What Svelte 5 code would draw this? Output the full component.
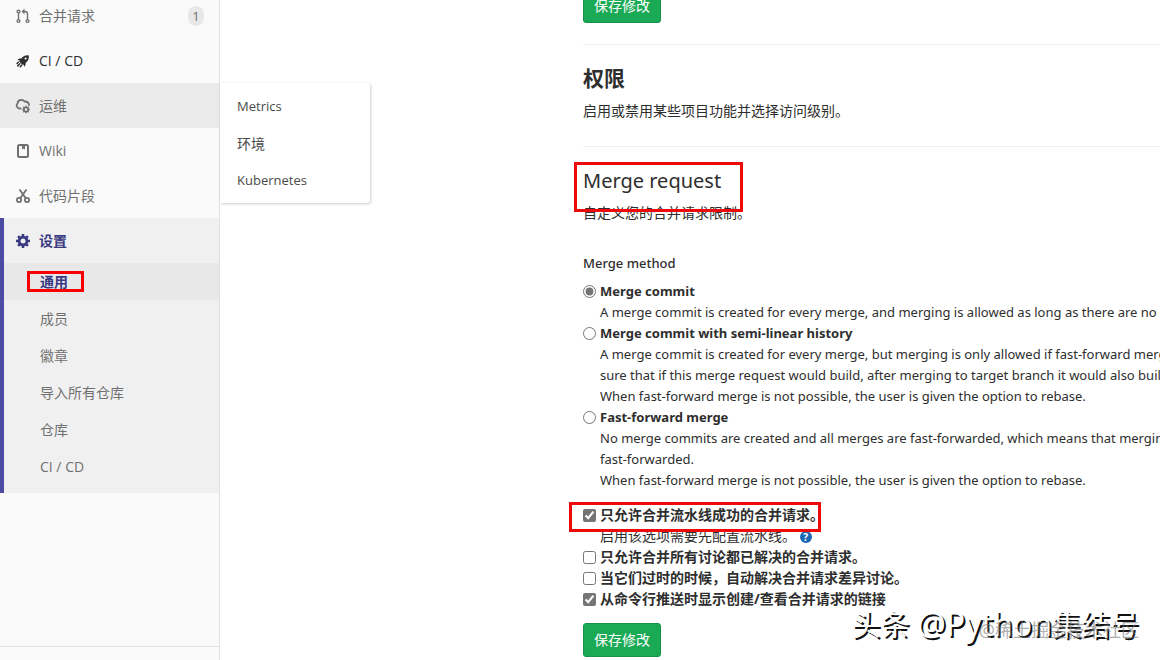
<script lang="ts">
	const submenu = ['通用', '成员', '徽章', '导入所有仓库', '仓库', 'CI / CD'];
	const flyout = ['Metrics', '环境', 'Kubernetes'];

	const methods = [
		{
			id: 'merge',
			label: 'Merge commit',
			lines: [
				'A merge commit is created for every merge, and merging is allowed as long as there are no conflicts.'
			]
		},
		{
			id: 'rebase_merge',
			label: 'Merge commit with semi-linear history',
			lines: [
				'A merge commit is created for every merge, but merging is only allowed if fast-forward merge is possible. This way you could make',
				'sure that if this merge request would build, after merging to target branch it would also build.',
				'When fast-forward merge is not possible, the user is given the option to rebase.'
			]
		},
		{
			id: 'ff',
			label: 'Fast-forward merge',
			lines: [
				'No merge commits are created and all merges are fast-forwarded, which means that merging is only allowed if the branch could be',
				'fast-forwarded.',
				'When fast-forward merge is not possible, the user is given the option to rebase.'
			]
		}
	];

	let method = $state('merge');

	let checks = $state([
		{
			id: 'pipeline',
			label: '只允许合并流水线成功的合并请求。',
			hint: '启用该选项需要先配置流水线。',
			on: true
		},
		{ id: 'discussions', label: '只允许合并所有讨论都已解决的合并请求。', hint: '', on: false },
		{ id: 'outdated', label: '当它们过时的时候，自动解决合并请求差异讨论。', hint: '', on: false },
		{ id: 'printing', label: '从命令行推送时显示创建/查看合并请求的链接', hint: '', on: true }
	]);
</script>

<div class="page">
	<aside class="sidebar">
		<ul class="nav">
			<li>
				<a class="item" href="#merge-requests">
					<svg viewBox="0 0 16 16" fill="none" stroke="currentColor" stroke-width="1.4">
						<circle cx="3.500" cy="3.500" r="1.4" />
						<circle cx="3.500" cy="13" r="1.4" />
						<circle cx="12.500" cy="13" r="1.4" />
						<path d="M3.500 5v6.500M12.500 11.500V6a2.500 2.500 0 0 0-2.500-2.500H9" />
						<path d="M9.500.5v6L6.500 3.500z" fill="currentColor" stroke="none" />
					</svg>
					<span>合并请求</span>
					<span class="badge">1</span>
				</a>
			</li>
			<li>
				<a class="item dark" href="#pipelines">
					<svg viewBox="0 0 16 16" fill="currentColor">
						<path
							fill-rule="evenodd"
							d="M13.800 2.400c.3 2.700-.5 4.900-2.200 6.600l-1 1c.2 1.500-.2 2.700-1.300 3.800l-.6-2.400-.9.700-3.700-3.700.7-.9-2.400-.6c1.100-1.100 2.300-1.500 3.800-1.300l1-1c1.700-1.700 3.900-2.500 6.600-2.200zM10.600 4.400a1.100 1.100 0 1 0 0 2.200 1.100 1.100 0 0 0 0-2.200z"
						/>
						<path
							d="M3.300 9.200l-1.300 1.300M4.900 10.800l-2.100 2.100M6.600 12.400L5.300 13.700"
							stroke="currentColor"
							stroke-width="1.500"
							stroke-linecap="round"
						/>
					</svg>
					<span>CI / CD</span>
				</a>
			</li>
			<li class="has-flyout">
				<a class="item hover" href="#operations">
					<svg viewBox="0 0 16 16" fill="none" stroke="currentColor">
						<path
							d="M5.500 10.500H4.300A3 3 0 0 1 2.500 5.400C2.800 3.200 4.600 1.800 6.800 2c1.300 0 2.300.7 2.900 1.500 2.400-.1 4 1.200 4.300 3.500"
							stroke-width="1.800"
							stroke-linecap="round"
						/>
						<circle cx="11" cy="11.500" r="2.100" stroke-width="1.700" />
						<path
							d="M11 7.700v1.500M11 13.800v1.500M7.200 11.500h1.500M13.300 11.500h1.500M8.300 8.800l1.100 1.100M12.600 13.100l1.100 1.100M13.700 8.800l-1.100 1.100M9.400 13.100l-1.100 1.100"
							stroke-width="1.400"
						/>
					</svg>
					<span>运维</span>
				</a>
				<ul class="flyout">
					{#each flyout as entry (entry)}
						<li><a href="#{entry}">{entry}</a></li>
					{/each}
				</ul>
			</li>
			<li>
				<a class="item" href="#wiki">
					<svg viewBox="0 0 16 16" fill="none" stroke="currentColor">
						<rect x="3" y="2" width="10" height="12" rx="1.500" stroke-width="2" />
						<path d="M7 2h3v4.500l-1.500-1L7 6.500z" fill="currentColor" stroke="none" />
					</svg>
					<span>Wiki</span>
				</a>
			</li>
			<li>
				<a class="item" href="#snippets">
					<svg viewBox="0 0 16 16" fill="none" stroke="currentColor" stroke-width="1.800">
						<circle cx="4" cy="12" r="2.100" />
						<circle cx="12" cy="12" r="2.100" />
						<path d="M4.500 1.500l6.300 8.800M11.500 1.500L5.200 10.300" />
					</svg>
					<span>代码片段</span>
				</a>
			</li>
			<li class="active">
				<a class="item" href="#settings">
					<svg viewBox="0 0 16 16" fill="none" stroke="currentColor">
						<circle cx="8" cy="8" r="3.900" stroke-width="2.800" />
						<path
							d="M8 1v2.500M8 12.500V15M1 8h2.500M12.500 8H15M3.100 3.100l1.700 1.700M11.200 11.200l1.700 1.700M12.900 3.100l-1.700 1.700M4.800 11.200l-1.700 1.700"
							stroke-width="2.600"
						/>
					</svg>
					<span>设置</span>
				</a>
				<ul class="submenu">
					{#each submenu as entry, i (entry)}
						<li>
							<a href="#{entry}" class:current={i === 0}>
								<span class:mark={i === 0}>{entry}</span>
							</a>
						</li>
					{/each}
				</ul>
			</li>
		</ul>
		<div class="collapse"></div>
	</aside>

	<main>
		<button type="button" class="save">保存修改</button>
		<hr />

		<section>
			<h4 class="strong">权限</h4>
			<p>启用或禁用某些项目功能并选择访问级别。</p>
		</section>
		<hr />

		<form onsubmit={(e) => e.preventDefault()}>
			<h4><span class="mark">Merge request</span></h4>
			<p>自定义您的合并请求限制。</p>

			<fieldset>
				<legend>Merge method</legend>
				{#each methods as m (m.id)}
					<div class="option">
						<input type="radio" id={m.id} name="method" value={m.id} bind:group={method} />
						<label for={m.id}>{m.label}</label>
						<div class="help">
							{#each m.lines as line (line)}
								<div>{line}</div>
							{/each}
						</div>
					</div>
				{/each}
			</fieldset>

			<div class="checks">
				{#each checks as check, i (check.id)}
					<div class="option" class:mark={i === 0}>
						<input type="checkbox" id={check.id} bind:checked={check.on} />
						<label for={check.id}>{check.label}</label>
						{#if check.hint}
							<div class="help">
								{check.hint}
								<a class="question" href="#help" aria-label="帮助">?</a>
							</div>
						{/if}
					</div>
				{/each}
			</div>

			<button type="submit" class="save">保存修改</button>
		</form>
	</main>

	<div class="watermark">
		<span class="big">头条 <span class="latin">@Python</span>集结号</span>
		<span class="small">@稀土掘金技术社区</span>
	</div>
</div>

<style>
	:global(body) {
		overflow: hidden;
		background: #fff;
	}

	.page {
		position: relative;
		display: flex;
		height: 100vh;
		overflow: hidden;
		color: #2e2e2e;
		font: 14px/21px 'Noto Sans', 'Noto Sans CJK SC', sans-serif;
	}

	ul {
		margin: 0;
		padding: 0;
		list-style: none;
	}

	a {
		color: inherit;
		text-decoration: none;
	}

	.sidebar {
		display: flex;
		flex: 0 0 220px;
		flex-direction: column;
		box-sizing: border-box;
		border-right: 1px solid #e1e1e1;
		background: #fafafa;
		color: #707070;
		font-family: 'Open Sans', 'Noto Sans CJK SC', sans-serif;
	}

	/* the list is scrolled slightly past its first entry */
	.nav {
		flex: 1;
		margin-top: -7px;
	}

	.item {
		display: flex;
		align-items: center;
		gap: 8px;
		height: 45px;
		padding: 0 15px;
	}

	.item svg {
		width: 16px;
		height: 16px;
	}

	.item.dark {
		color: #2e2e2e;
	}

	.item.hover {
		background: #ebebeb;
	}

	.badge {
		width: 16px;
		margin-left: auto;
		border-radius: 10px;
		background: #e8e8e8;
		font-size: 13px;
		line-height: 20px;
		text-align: center;
	}

	.has-flyout {
		position: relative;
	}

	.flyout {
		position: absolute;
		z-index: 2;
		top: 0;
		left: 100%;
		width: 150px;
		margin-left: 1px;
		padding: 5px 0 4px;
		border-radius: 0 3px 3px 0;
		background: #fff;
		box-shadow: 1px 1px 3px rgba(0, 0, 0, 0.2);
		color: #4a4a4a;
		font-size: 13px;
	}

	.flyout a {
		display: block;
		padding: 8px 17px;
	}

	.flyout li:nth-child(2) {
		font-size: 14px;
	}

	.active {
		padding-bottom: 8px;
		background: #f0f0f0;
		box-shadow: inset 4px 0 #4b4ba3;
	}

	.active > .item {
		color: #393982;
		font-weight: 600;
	}

	.submenu a {
		display: block;
		padding: 8px 16px 8px 40px;
	}

	.submenu .current {
		background: linear-gradient(to right, #4b4ba3 4px, #e8e8e8 4px);
		color: #393982;
		font-weight: 600;
	}

	.collapse {
		height: 13px;
		border-top: 1px solid #e1e1e1;
	}

	.mark {
		position: relative;
	}

	.mark::after {
		position: absolute;
		border: 3px solid #ee0a0a;
		content: '';
		pointer-events: none;
	}

	.submenu .mark::after {
		inset: -1px -16px -1px -13px;
		border-color: #f90000;
	}

	h4 .mark::after {
		inset: -5px -22px -18px -9px;
	}

	.option.mark::after {
		top: -2px;
		left: -14px;
		width: 246px;
		height: 24px;
	}

	main {
		flex: 1;
		min-width: 0;
		margin-top: -11px;
		padding-left: 363px;
		overflow: hidden;
		white-space: nowrap;
	}

	section {
		padding-bottom: 4px;
	}

	hr {
		height: 1px;
		margin: 21px 0 20px;
		border: 0;
		background: #eee;
	}

	h4 {
		margin: 0 0 7px;
		font-size: 20px;
		font-weight: 400;
		line-height: 28px;
	}

	h4.strong {
		margin-bottom: 9px;
		font-size: 21px;
		font-weight: 700;
		line-height: 26px;
	}

	p {
		margin: 0;
	}

	fieldset {
		min-width: 0;
		margin: 30px 0 13px;
		padding: 0;
		border: 0;
		font-size: 13px;
	}

	legend {
		padding: 0 0 7px;
		font-weight: 500;
	}

	.option {
		display: grid;
		grid-template-columns: 13px 1fr;
		column-gap: 4px;
		align-items: center;
	}

	.option input {
		width: 13px;
		height: 13px;
		margin: 0;
		accent-color: #757575;
	}

	.checks input {
		margin-top: 2px;
	}

	.option label {
		font-weight: 700;
	}

	.help {
		grid-column: 2;
	}

	.question {
		display: inline-block;
		width: 12px;
		border-radius: 50%;
		background: #1b69b6;
		color: #fff;
		font-size: 10px;
		font-weight: 700;
		line-height: 12px;
		text-align: center;
	}

	.save {
		display: block;
		height: 34px;
		padding: 0 10px 2px;
		border: 1px solid #168f48;
		border-radius: 3px;
		background: #1aaa55;
		color: #fff;
		font: inherit;
	}

	.checks {
		margin-bottom: 14px;
	}

	.watermark {
		position: absolute;
		right: 21px;
		bottom: 13px;
		display: grid;
		justify-items: end;
		align-items: end;
		pointer-events: none;
		white-space: nowrap;
	}

	.small,
	.big {
		grid-area: 1 / 1;
	}

	.small {
		color: rgba(120, 120, 120, 0.6);
		font-size: 18px;
		line-height: 34px;
	}

	.big {
		color: #fff;
		font-size: 29px;
		line-height: 44px;
		text-shadow: 2px 2px 0 #111;
	}

	.latin {
		font-size: 32px;
	}
</style>
